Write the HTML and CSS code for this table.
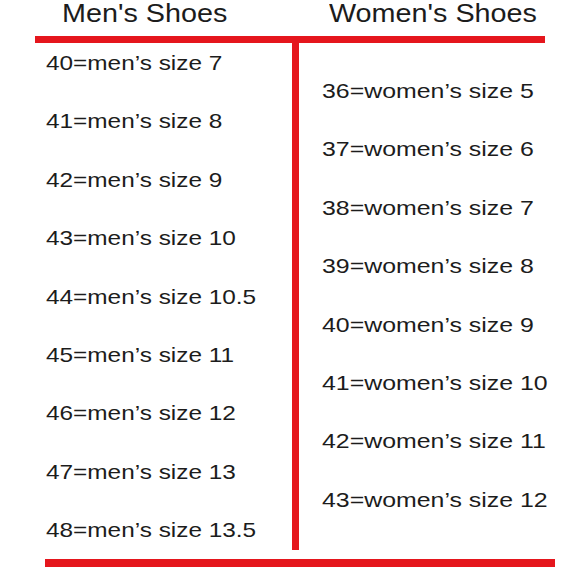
FILE: index.html
```html
<!DOCTYPE html>
<html lang="en">
<head>
<meta charset="utf-8">
<title>Shoe Size Chart</title>
<link rel="stylesheet" href="styles.css">
</head>
<body>
<div class="chart">
  <div class="heads">
    <div class="head head-men">Men's Shoes</div>
    <div class="head head-women">Women's Shoes</div>
  </div>
  <div class="rule-top"></div>
  <div class="cols">
    <div class="col col-left">
      <div class="row">40=men’s size 7</div>
      <div class="row">41=men’s size 8</div>
      <div class="row">42=men’s size 9</div>
      <div class="row">43=men’s size 10</div>
      <div class="row">44=men’s size 10.5</div>
      <div class="row">45=men’s size 11</div>
      <div class="row">46=men’s size 12</div>
      <div class="row">47=men’s size 13</div>
      <div class="row">48=men’s size 13.5</div>
    </div>
    <div class="vbar"></div>
    <div class="col col-right">
      <div class="row">36=women’s size 5</div>
      <div class="row">37=women’s size 6</div>
      <div class="row">38=women’s size 7</div>
      <div class="row">39=women’s size 8</div>
      <div class="row">40=women’s size 9</div>
      <div class="row">41=women’s size 10</div>
      <div class="row">42=women’s size 11</div>
      <div class="row">43=women’s size 12</div>
    </div>
  </div>
  <div class="rule-bottom"></div>
</div>
</body>
</html>
```
FILE: styles.css
```css
html, body {
  margin: 0;
  padding: 0;
  background: #ffffff;
}
body {
  font-family: "Liberation Sans", Arial, sans-serif;
  color: #1c1c1c;
}
.chart {
  width: 579px;
  height: 580px;
  overflow: hidden;
}
.heads {
  display: flex;
  align-items: flex-start;
  height: 36px;
  padding-left: 62px;
}
.head {
  font-size: 25px;
  line-height: 26px;
  white-space: nowrap;
  transform: scaleX(1.15);
  transform-origin: left center;
}
.head-men {
  width: 267px;
  flex: none;
}
.rule-top {
  margin-left: 35px;
  width: 510px;
  height: 7px;
  background: #e5161d;
}
.cols {
  display: flex;
  height: 507px;
}
.col {
  display: flex;
  flex-direction: column;
  gap: 32.4px;
}
.row {
  font-size: 21px;
  line-height: 26px;
  white-space: nowrap;
  transform: scaleX(1.16);
  transform-origin: left center;
}
.col-right .row {
  transform: scaleX(1.185);
}
.col-left {
  width: 246px;
  padding-left: 46px;
  padding-top: 7px;
}
.vbar {
  width: 7px;
  background: #e5161d;
}
.col-right {
  padding-left: 23px;
  padding-top: 35px;
}
.rule-bottom {
  margin-top: 9px;
  margin-left: 45px;
  width: 510px;
  height: 8px;
  background: #e5161d;
}
```
